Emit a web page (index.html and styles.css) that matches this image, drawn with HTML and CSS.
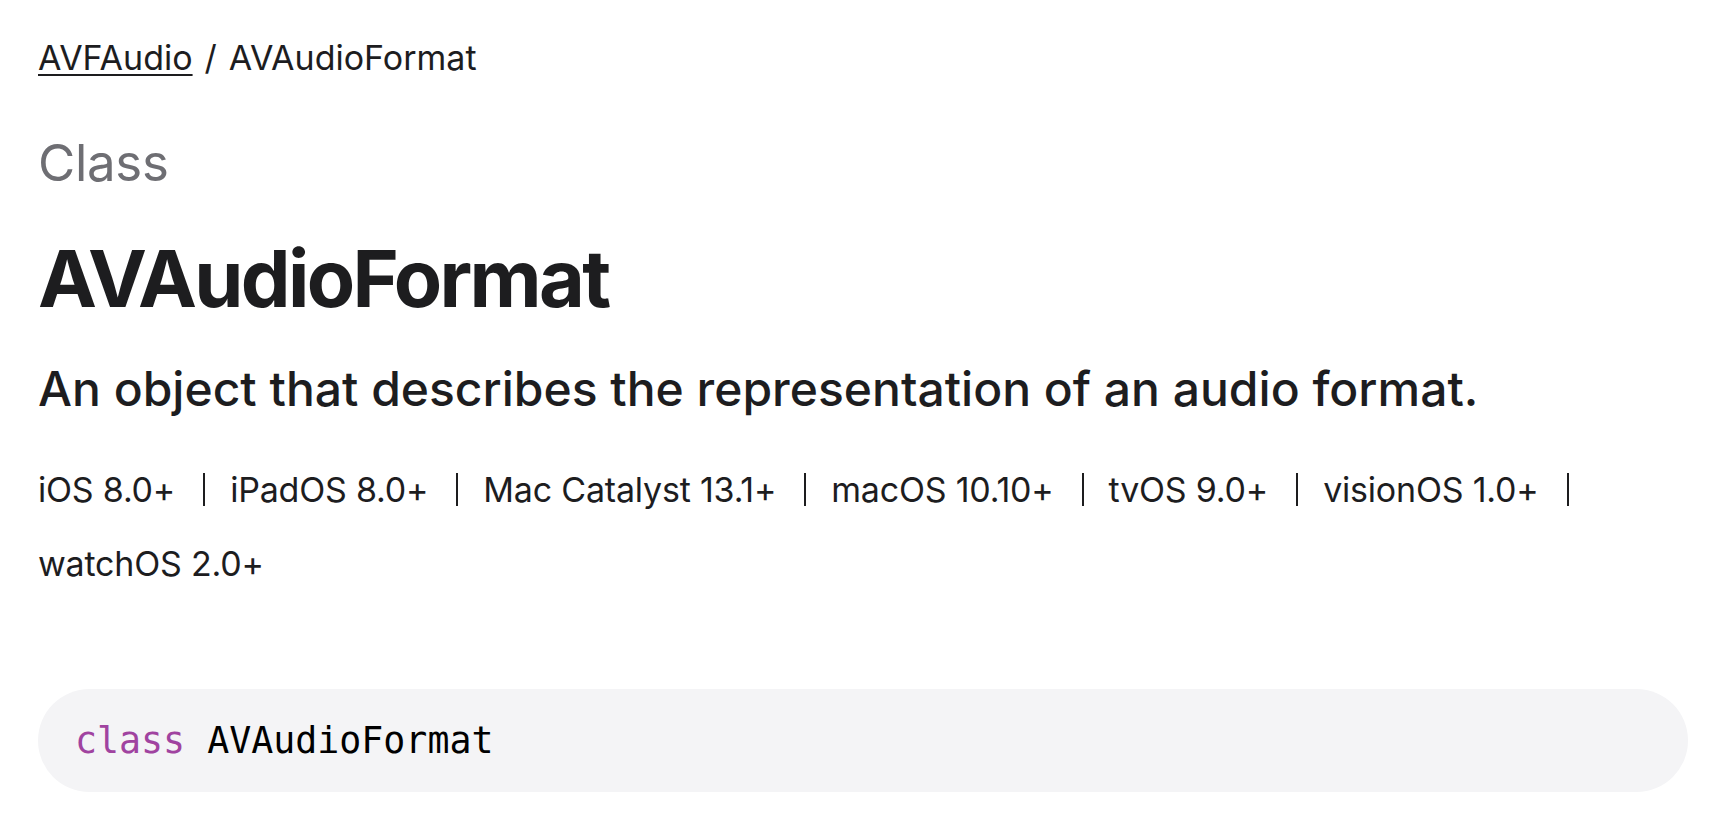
FILE: index.html
```html
<!DOCTYPE html>
<html lang="en">
<head>
<meta charset="utf-8">
<title>AVAudioFormat</title>
<link rel="stylesheet" href="styles.css">
</head>
<body>
<main class="page">
  <nav class="breadcrumb">
    <a class="crumb-link" href="#">AVFAudio</a>
    <span class="crumb-sep">/</span>
    <span class="crumb-current">AVAudioFormat</span>
  </nav>
  <div class="eyebrow">Class</div>
  <h1 class="title">AVAudioFormat</h1>
  <p class="abstract">An object that describes the representation of an audio format.</p>
  <ul class="availability">
    <li class="platform">iOS 8.0+</li>
    <li class="platform">iPadOS 8.0+</li>
    <li class="platform">Mac Catalyst 13.1+</li>
    <li class="platform">macOS 10.10+</li>
    <li class="platform">tvOS 9.0+</li>
    <li class="platform">visionOS 1.0+</li>
    <li class="platform last">watchOS 2.0+</li>
  </ul>
  <div class="declaration">
    <code class="code"><span class="kw">class</span> <span class="type">AVAudioFormat</span></code>
  </div>
</main>
</body>
</html>
```
FILE: styles.css
```css
* { box-sizing: border-box; }

html, body {
  margin: 0;
  padding: 0;
  background: #ffffff;
}

body {
  font-family: Inter, "Noto Sans", "Liberation Sans", sans-serif;
  color: #1d1d1f;
}

.page {
  padding: 38px 22px 0 38px;
  display: flex;
  flex-direction: column;
}

.breadcrumb {
  display: flex;
  align-items: baseline;
  gap: 12px;
  font-size: 34px;
  line-height: 40px;
  letter-spacing: 0;
}

.crumb-link {
  color: #1d1d1f;
  text-decoration: underline;
  text-decoration-thickness: 2px;
  text-underline-offset: 4px;
}

.eyebrow {
  margin-top: 55px;
  font-size: 51px;
  line-height: 60px;
  color: #6e6e73;
  letter-spacing: -0.3px;
}

.title {
  margin: 40px 0 0;
  font-size: 79px;
  line-height: 90px;
  font-weight: 700;
  letter-spacing: -2.7px;
}

.abstract {
  margin: 38px 0 0;
  font-size: 48px;
  line-height: 56px;
  font-weight: 500;
  letter-spacing: 0;
}

.availability {
  list-style: none;
  margin: 56px 0 0;
  padding: 0;
  display: flex;
  flex-wrap: wrap;
  row-gap: 41px;
  font-size: 34px;
  line-height: 33px;
  letter-spacing: -0.2px;
}

.platform {
  padding-right: 28px;
  margin-right: 25px;
  border-right: 2px solid #1d1d1f;
}

.platform.last {
  border-right: none;
}

.declaration {
  margin-top: 109px;
  background: #f4f4f6;
  border-radius: 52px;
  padding: 30px 37px;
}

.code {
  font-family: "DejaVu Sans Mono", "Liberation Mono", monospace;
  font-size: 36.6px;
  line-height: 43px;
  color: #000000;
  white-space: pre;
}

.kw {
  color: #a043a0;
}
```
